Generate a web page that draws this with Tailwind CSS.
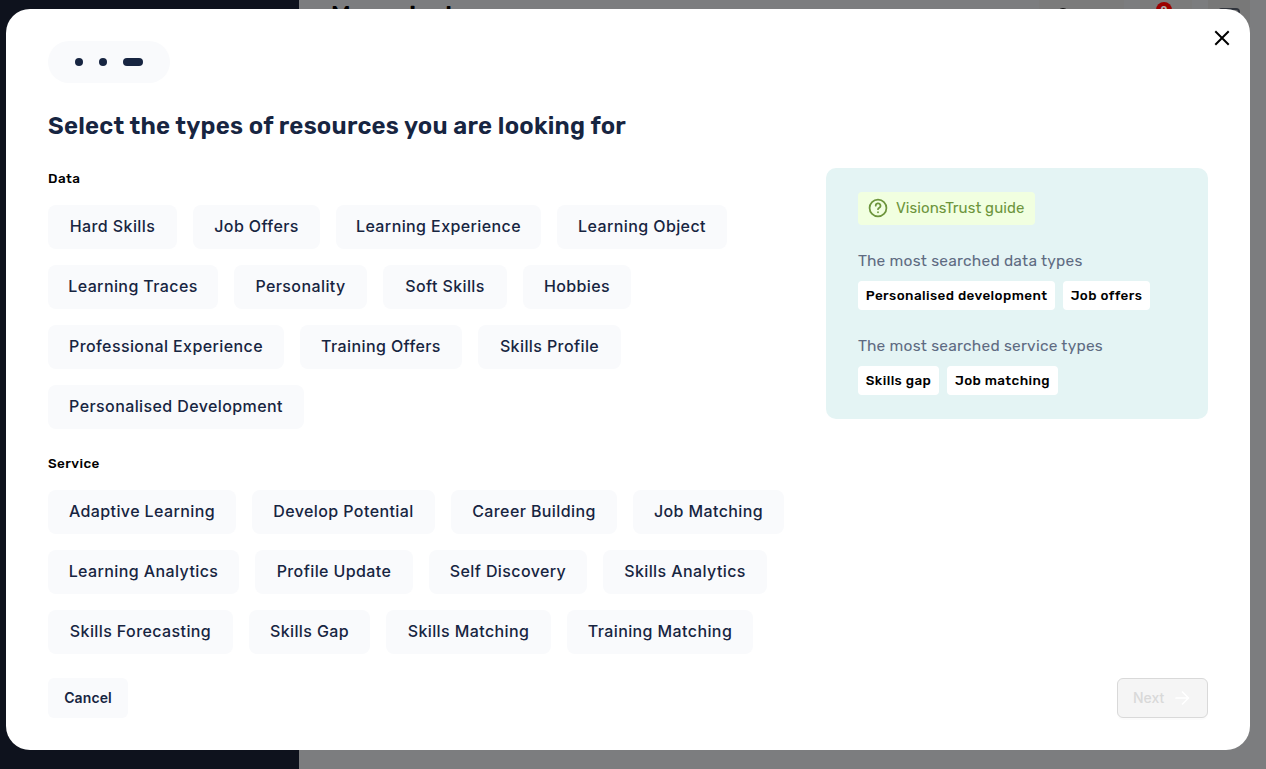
<!DOCTYPE html>
<html lang="en"><head><meta charset="utf-8"><title>Resources</title>
<script src="https://cdn.jsdelivr.net/npm/@tailwindcss/browser@4"></script></head>
<body class="relative h-[769px] w-[1266px] overflow-hidden bg-[#7c7d7f] font-['Rubik','Roboto',sans-serif]">
<div class="flex h-full">
  <aside class="w-[299px] bg-[#0e121d]"></aside>
  <header class="flex h-[50px] flex-1 items-start bg-[#7c7d7f] pl-8">
    <h1 class="w-[708px] text-2xl leading-[31px] font-semibold text-black">My projects</h1>
    <div class="flex h-10 w-[85px] justify-start bg-[#7b7b7b] pl-[18px]"><span class="mt-2 h-3 w-3 rounded-full bg-[#111]"></span></div>
    <div class="ml-4 flex h-10 w-[52px] justify-center bg-[#7b7b7b] pr-1"><span class="mt-0.5 h-4 w-4 rounded-full bg-[#9c0000] text-center text-[10px] leading-4 font-bold text-[#aaa]">0</span></div>
    <div class="ml-4 flex h-10 w-[42px] justify-center bg-[#787878]"><span class="mt-2 h-5 w-[22px] rounded-sm border-2 border-[#30343c]"></span></div>
  </header>
</div>
<main class="absolute top-[9px] left-[6px] flex h-[741px] w-[1244px] flex-col rounded-3xl bg-white px-[42px] pt-8 pb-8">
  <svg class="absolute top-[21px] right-5 h-4 w-4" viewBox="0 0 16 16" fill="none" stroke="#000" stroke-width="2" stroke-linecap="square"><path d="M2 2l12 12M14 2L2 14"/></svg>
  <div class="flex h-[42px] w-[122px] items-center gap-4 rounded-full bg-[#f9fafc] pl-[27px]">
    <i class="h-2 w-2 rounded-full bg-[#172541]"></i><i class="h-2 w-2 rounded-full bg-[#172541]"></i><i class="h-2 w-5 rounded-full bg-[#172541]"></i>
  </div>
  <h2 class="mt-[27px] h-8 whitespace-nowrap text-2xl leading-8 font-semibold tracking-[0.23px] text-[#172541]">Select the types of resources you are looking for</h2>
  <div class="mt-[26px] flex items-start justify-between">
    <div class="w-[740px] whitespace-nowrap font-['Inter',sans-serif] font-medium tracking-[0.4px] text-[#172541]">
      <h3 class="h-[37px] font-['Rubik','Roboto',sans-serif] text-[13.5px] leading-[21px] font-medium tracking-[0.4px] text-black">Data</h3>
      <div class="flex flex-col gap-4 leading-[42px] [&_button]:pb-0.5">
        <div class="flex gap-4"><button class="h-11 w-[129px] rounded-lg bg-[#f9fafc]">Hard Skills</button><button class="h-11 w-[127px] rounded-lg bg-[#f9fafc]">Job Offers</button><button class="h-11 w-[205px] rounded-lg bg-[#f9fafc]">Learning Experience</button><button class="h-11 w-[170px] rounded-lg bg-[#f9fafc]">Learning Object</button></div>
        <div class="flex gap-4"><button class="h-11 w-[170px] rounded-lg bg-[#f9fafc]">Learning Traces</button><button class="h-11 w-[133px] rounded-lg bg-[#f9fafc]">Personality</button><button class="h-11 w-[124px] rounded-lg bg-[#f9fafc]">Soft Skills</button><button class="h-11 w-[108px] rounded-lg bg-[#f9fafc]">Hobbies</button></div>
        <div class="flex gap-4"><button class="h-11 w-[236px] rounded-lg bg-[#f9fafc]">Professional Experience</button><button class="h-11 w-[162px] rounded-lg bg-[#f9fafc]">Training Offers</button><button class="h-11 w-[143px] rounded-lg bg-[#f9fafc]">Skills Profile</button></div>
        <div class="flex gap-4"><button class="h-11 w-[256px] rounded-lg bg-[#f9fafc]">Personalised Development</button></div>
      </div>
      <h3 class="mt-6 h-[37px] font-['Rubik','Roboto',sans-serif] text-[13.5px] leading-[21px] font-medium tracking-[0.4px] text-black">Service</h3>
      <div class="flex flex-col gap-4 leading-[42px] [&_button]:pb-0.5">
        <div class="flex gap-4"><button class="h-11 w-[188px] rounded-lg bg-[#f9fafc]">Adaptive Learning</button><button class="h-11 w-[183px] rounded-lg bg-[#f9fafc]">Develop Potential</button><button class="h-11 w-[166px] rounded-lg bg-[#f9fafc]">Career Building</button><button class="h-11 w-[151px] rounded-lg bg-[#f9fafc]">Job Matching</button></div>
        <div class="flex gap-4"><button class="h-11 w-[191px] rounded-lg bg-[#f9fafc]">Learning Analytics</button><button class="h-11 w-[158px] rounded-lg bg-[#f9fafc]">Profile Update</button><button class="h-11 w-[158px] rounded-lg bg-[#f9fafc]">Self Discovery</button><button class="h-11 w-[164px] rounded-lg bg-[#f9fafc]">Skills Analytics</button></div>
        <div class="flex gap-4"><button class="h-11 w-[185px] rounded-lg bg-[#f9fafc]">Skills Forecasting</button><button class="h-11 w-[121px] rounded-lg bg-[#f9fafc]">Skills Gap</button><button class="h-11 w-[165px] rounded-lg bg-[#f9fafc]">Skills Matching</button><button class="h-11 w-[186px] rounded-lg bg-[#f9fafc]">Training Matching</button></div>
      </div>
    </div>
    <section class="h-[251px] w-[382px] rounded-[10px] bg-[#e4f4f4] px-8 pt-6 whitespace-nowrap">
      <div class="flex h-[33px] w-[177px] items-center gap-2 rounded bg-[#f1ffe0] pl-[9px] text-[#6d953c]">
        <svg class="-mt-0.5 h-[22px] w-[22px] shrink-0" viewBox="0 0 24 24" fill="none" stroke="currentColor" stroke-width="1.9" stroke-linecap="round" stroke-linejoin="round"><circle cx="12" cy="12" r="9.2"/><path d="M9.5 9.5a2.6 2.6 0 1 1 3.9 2.2c-.9.5-1.4.9-1.4 1.6"/><path d="M12 16.6v.1"/></svg>
        <span class="-ml-px text-[15px] tracking-[0.08px]">VisionsTrust guide</span>
      </div>
      <p class="mt-6 h-8 text-[15.5px] leading-[25px] tracking-[0.24px] text-[#5e6b82]">The most searched data types</p>
      <div class="flex gap-2 text-center text-[13.5px] leading-[29px] font-medium tracking-[0.4px] text-black"><span class="h-[29px] w-[197px] rounded bg-white">Personalised development</span><span class="h-[29px] w-[87px] rounded bg-white">Job offers</span></div>
      <p class="mt-6 h-8 text-[15.5px] leading-[25px] tracking-[0.24px] text-[#5e6b82]">The most searched service types</p>
      <div class="flex gap-2 text-center text-[13.5px] leading-[29px] font-medium tracking-[0.4px] text-black"><span class="h-[29px] w-[81px] rounded bg-white">Skills gap</span><span class="h-[29px] w-[111px] rounded bg-white">Job matching</span></div>
    </section>
  </div>
  <footer class="mt-6 flex justify-between font-['Inter',sans-serif] text-sm font-medium">
    <button class="h-10 w-20 rounded-md bg-[#f9fafc] font-semibold tracking-[0.1px] text-[#172541]">Cancel</button>
    <button class="flex h-10 w-[91px] items-center rounded-md border border-[#d9d9d9] bg-[#f5f5f5] pl-[15px] text-[#d9d9d9] shadow-[0_2px_0_rgba(0,0,0,0.015)]">Next<svg class="ml-2.5 h-4 w-4" viewBox="0 0 16 16" fill="none" stroke="#fff" stroke-width="1.7" stroke-linecap="round" stroke-linejoin="round"><path d="M2 8h12.5M8.5 2l6 6-6 6"/></svg></button>
  </footer>
</main>
</body></html>
